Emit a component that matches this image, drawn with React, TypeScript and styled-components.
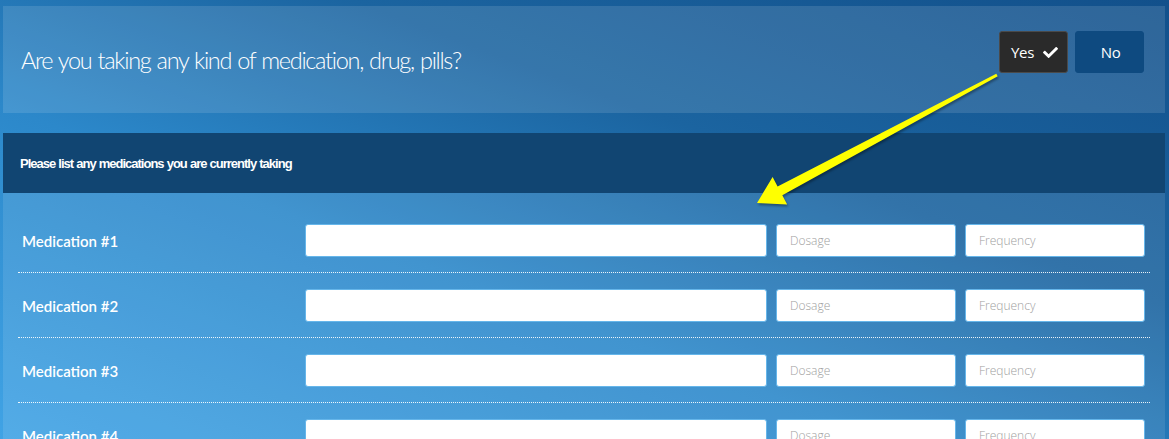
import React from 'react';
import styled, { createGlobalStyle } from 'styled-components';
import { FaCheck } from 'react-icons/fa';

const GlobalStyle = createGlobalStyle`
  html, body {
    margin: 0;
    padding: 0;
    height: 100%;
    overflow: hidden;
  }
  body {
    font-family: "Open Sans", "Liberation Sans", sans-serif;
    color: #fff;
  }
`;

const Page = styled.div`
  position: relative;
  width: 1169px;
  height: 439px;
  box-sizing: border-box;
  padding: 6px 4px 0 3px;
  background: linear-gradient(to top right, #40a3e5 0%, #2c88ca 38%, #1b64a0 65%, #12508b 100%);
  overflow: hidden;
`;

const QuestionPanel = styled.div`
  height: 107px;
  box-sizing: border-box;
  padding: 0 21px 0 18px;
  display: flex;
  align-items: center;
  justify-content: space-between;
  background: rgba(255, 255, 255, 0.12);
`;

const Question = styled.h2`
  margin: 0;
  font-family: Lato, "Open Sans", sans-serif;
  font-weight: 300;
  font-size: 23.5px;
  letter-spacing: -1.3px;
  word-spacing: 1px;
  color: #fff;
`;

const Choices = styled.div`
  align-self: flex-start;
  display: flex;
  gap: 7px;
  margin-top: 25px;
`;

const Choice = styled.button<{ $active?: boolean }>`
  width: 69px;
  height: 42px;
  box-sizing: border-box;
  display: flex;
  align-items: center;
  justify-content: center;
  gap: 9px;
  padding: 0 0 0 2px;
  border-radius: 3px;
  border: 1px solid ${p => (p.$active ? '#4a4a4a' : '#0e4a80')};
  background: ${p => (p.$active ? '#2a2a2a' : '#0e4a80')};
  color: #fff;
  font-family: "Open Sans", "Liberation Sans", sans-serif;
  font-size: 15px;
  letter-spacing: -0.3px;
  cursor: pointer;

  svg {
    font-size: 15px;
  }
`;

const Section = styled.div`
  margin-top: 20px;
  background: rgba(255, 255, 255, 0.1);
`;

const SectionHeader = styled.div`
  height: 60px;
  box-sizing: border-box;
  padding: 0 17px;
  display: flex;
  align-items: center;
  background: #114572;
  font-family: "Liberation Sans", Arial, sans-serif;
  font-weight: 700;
  font-size: 13px;
  letter-spacing: -1px;
  word-spacing: 0.5px;
`;

const List = styled.div`
  padding: 15px 15px 0 15px;
`;

const Row = styled.div`
  display: flex;
  align-items: center;
  gap: 9px;
  padding: 16px 0 15px;
  border-bottom: 1px dotted rgba(255, 255, 255, 0.9);
`;

const Label = styled.label`
  flex: 0 0 278px;
  box-sizing: border-box;
  padding-left: 4px;
  font-family: Lato, "Open Sans", sans-serif;
  font-size: 15px;
  font-weight: 600;
  color: #fff;
`;

const Field = styled.input<{ $w: number }>`
  flex: 0 0 ${p => p.$w}px;
  min-width: 0;
  height: 33px;
  box-sizing: border-box;
  padding: 0 13px;
  border: 1px solid #66b6ea;
  border-radius: 3px;
  background: #fff;
  font-family: "Open Sans", "Liberation Sans", sans-serif;
  font-size: 12px;
  color: #333;
  outline: none;

  &::placeholder {
    color: #a0a0a0;
    font-weight: 300;
  }
`;

const Pointer = styled.svg`
  position: absolute;
  left: 0;
  top: 0;
  width: 1169px;
  height: 439px;
  pointer-events: none;
  filter: drop-shadow(1px 2px 1px rgba(0, 0, 0, 0.35));
`;

const meds = [1, 2, 3, 4];

export default function App() {
  return (
    <>
      <GlobalStyle />
      <Page>
        <QuestionPanel>
          <Question>Are you taking any kind of medication, drug, pills?</Question>
          <Choices>
            <Choice $active>
              Yes <FaCheck />
            </Choice>
            <Choice>No</Choice>
          </Choices>
        </QuestionPanel>

        <Section>
          <SectionHeader>Please list any medications you are currently taking</SectionHeader>
          <List>
            {meds.map(n => (
              <Row key={n}>
                <Label>Medication #{n}</Label>
                <Field $w={462} />
                <Field $w={180} placeholder="Dosage" />
                <Field $w={180} placeholder="Frequency" />
              </Row>
            ))}
          </List>
        </Section>

        <Pointer viewBox="0 0 1169 439">
          <polygon
            points="757,203 772.6,177.1 777.6,186.4 996.3,73.7 997.7,76.3 782.3,195.2 787.2,204.5"
            fill="#ffff00"
          />
        </Pointer>
      </Page>
    </>
  );
}
